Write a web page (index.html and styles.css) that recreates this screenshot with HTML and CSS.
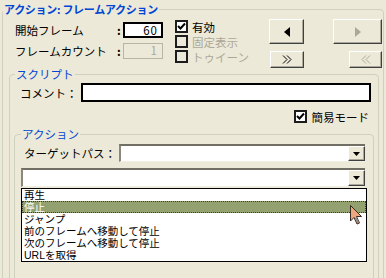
FILE: index.html
```html
<!DOCTYPE html>
<html>
<head>
    <link rel="stylesheet" href="styles.css">
</head>
<body>

    <fieldset class="group outer">
        <legend>アクション: フレームアクション</legend>

        <div class="top">
            <div class="fields">
                <div class="field">
                    <span class="lbl">開始フレーム</span>
                    <span class="colon">:</span>
                    <span class="box num">60</span>
                </div>
                <div class="field">
                    <span class="lbl">フレームカウント</span>
                    <span class="colon">:</span>
                    <span class="box num off">1</span>
                </div>
            </div>

            <div class="checks">
                <div class="chk">
                    <span class="cb on"><svg width="9" height="9" viewBox="0 0 9 9"><path d="M1 4 L3.5 6.5 L8 1.5" fill="none" stroke="#000" stroke-width="2"/></svg></span>
                    有効
                </div>
                <div class="chk off"><span class="cb"></span>固定表示</div>
                <div class="chk off"><span class="cb"></span>トゥイーン</div>
            </div>

            <div class="btns">
                <div class="btnrow">
                    <div class="btn big prev"><svg width="8" height="10" viewBox="0 0 8 10"><path d="M7 0 L7 10 L1 5 Z" fill="#000"/></svg></div>
                    <div class="btn big next"><svg width="8" height="10" viewBox="0 0 8 10"><path d="M1 0 L1 10 L7 5 Z" fill="#ACA899"/></svg></div>
                </div>
                <div class="btnrow">
                    <div class="btn small fwd"><svg width="12" height="9" viewBox="0 0 12 9"><path d="M2 0.5 L6 4.5 L2 8.5 M6 0.5 L10 4.5 L6 8.5" fill="none" stroke="#000" stroke-width="1"/></svg></div>
                    <div class="btn small back"><svg width="12" height="9" viewBox="0 0 12 9"><path d="M10 0.5 L6 4.5 L10 8.5 M6 0.5 L2 4.5 L6 8.5" fill="none" stroke="#ACA899" stroke-width="1"/></svg></div>
                </div>
            </div>
        </div>

        <fieldset class="group script">
            <legend>スクリプト</legend>

            <div class="comment">
                <span class="clbl">コメント：</span>
                <span class="box wide"></span>
            </div>

            <div class="simple">
                <span class="cb on"><svg width="9" height="9" viewBox="0 0 9 9"><path d="M1 4 L3.5 6.5 L8 1.5" fill="none" stroke="#000" stroke-width="2"/></svg></span>
                簡易モード
            </div>

            <fieldset class="group action">
                <legend>アクション</legend>

                <div class="target">
                    <span class="tlbl">ターゲットパス：</span>
                    <div class="sel">
                        <span class="seltext"></span>
                        <span class="drop"><svg width="7" height="4" viewBox="0 0 7 4"><path d="M0 0 L7 0 L3.5 4 Z" fill="#000"/></svg></span>
                    </div>
                </div>

                <div class="sel second">
                    <span class="seltext"></span>
                    <span class="drop"><svg width="7" height="4" viewBox="0 0 7 4"><path d="M0 0 L7 0 L3.5 4 Z" fill="#000"/></svg></span>
                </div>

                <ul class="list">
                    <li>再生</li>
                    <li class="picked">停止</li>
                    <li>ジャンプ</li>
                    <li>前のフレームへ移動して停止</li>
                    <li>次のフレームへ移動して停止</li>
                    <li>URLを取得</li>
                </ul>
            </fieldset>
        </fieldset>
    </fieldset>

    <svg class="pointer" width="14" height="21" viewBox="0 0 14 21">
        <path d="M0.5 0.5 L0.5 16 L4 12.5 L7 19 L9.5 18 L6.5 11.5 L11.5 11.5 Z" fill="#EBA77E" stroke="#3a2a22" stroke-width="1"/>
        <path d="M5 13 L7.3 18.2 L9 17.5 L6.8 12.5 Z" fill="#8E8E8E"/>
    </svg>

</body>
</html>
```

FILE: styles.css
```css
*{
    margin: 0;
    padding: 0;
    box-sizing: border-box;
}
body {
    font-family: "Noto Sans CJK JP", sans-serif;
    font-size: 11.5px;
    color: #000;
    background-color: #ECE9D8;
    height: 278px;
    overflow: hidden;
    padding-top: 2px;
    position: relative;
}

.group {
    border: 1px solid #D0D0BF;
    border-radius: 4px;
    min-width: 0;
}
.group legend {
    color: #0046D5;
    line-height: 14px;
    padding: 0 1px;
}

.outer {
    margin: 0 2px;
    height: 400px;
}
.outer > legend {
    font-weight: bold;
    font-size: 11px;
    letter-spacing: -0.3px;
}

.top {
    display: flex;
    height: 51px;
    padding: 3px 0 0 12px;
}
.fields {
    display: flex;
    flex-direction: column;
    gap: 5px;
    width: 148px;
    padding-top: 3px;
}
.field {
    display: flex;
    align-items: center;
    height: 16px;
}
.lbl {
    width: 100px;
    white-space: nowrap;
}
.colon {
    width: 9px;
    text-align: center;
    font-weight: bold;
}
.box {
    display: block;
    background-color: #fff;
    border: 2px solid #000;
}
.num {
    width: 40px;
    height: 16px;
    line-height: 12px;
    text-align: right;
    padding-right: 3px;
    letter-spacing: 1px;
}
.num.off {
    background-color: #ECE9D8;
    border: 1px solid #B8B5A6;
    color: #ACA899;
    padding-right: 4px;
}

.checks {
    display: flex;
    flex-direction: column;
    margin-left: 12px;
}
.chk {
    display: flex;
    align-items: center;
    gap: 4px;
    height: 15px;
    white-space: nowrap;
}
.chk.off {
    color: #ACA899;
}
.cb {
    display: flex;
    align-items: center;
    justify-content: center;
    width: 13px;
    height: 13px;
    border: 2px solid #1c1c1c;
    background-color: #ECE9D8;
}
.cb.on {
    background-color: #fff;
}

.btns {
    display: flex;
    flex-direction: column;
    gap: 7px;
    width: 113px;
    margin-left: auto;
    margin-right: 1px;
}
.btnrow {
    display: flex;
    justify-content: space-between;
}
.btn {
    display: flex;
    align-items: center;
    justify-content: center;
    background-color: #ECE9D8;
    border: 1px solid;
    border-color: #fff #404040 #404040 #fff;
    box-shadow: inset -1px -1px 0 #ACA899;
}
.big {
    height: 25px;
}
.prev {
    width: 35px;
}
.next {
    width: 49px;
}
.small {
    height: 17px;
}
.fwd {
    width: 34px;
    margin-left: 1px;
}
.back {
    width: 33px;
}

.script {
    margin: 0 4px 0 6px;
}
.script > legend {
    margin-left: 5px;
}
.comment {
    display: flex;
    align-items: center;
    padding: 2px 7px 0 10px;
}
.clbl {
    width: 61px;
    white-space: nowrap;
}
.wide {
    flex: 1;
    height: 19px;
}
.simple {
    display: flex;
    align-items: center;
    justify-content: flex-end;
    gap: 5px;
    height: 13px;
    margin-top: 8px;
    padding-right: 9px;
}

.action {
    margin: 4px 4px 0 4px;
    padding-top: 3px;
    padding-bottom: 60px;
}
.action > legend {
    margin-left: 6px;
}
.action > legend ~ * {
    margin-left: 6px;
    margin-right: 8px;
}
.target {
    display: flex;
    align-items: center;
    height: 18px;
}
.tlbl {
    width: 98px;
    padding-left: 3px;
    white-space: nowrap;
}
.sel {
    flex: 1;
    display: flex;
    height: 18px;
    background-color: #fff;
    border-style: solid;
    border-width: 2px 0 1px 2px;
    border-color: #716F64 #F1EFE2 #F1EFE2 #8A887C;
}
.seltext {
    flex: 1;
}
.drop {
    display: flex;
    align-items: center;
    justify-content: center;
    width: 17px;
    background-color: #ECE9D8;
    border: 1px solid;
    border-color: #fff #404040 #404040 #fff;
    box-shadow: inset -1px -1px 0 #ACA899;
}
.action > .second {
    height: 19px;
    margin-top: 6px;
}
.action > .list {
    list-style: none;
    margin-top: 1px;
    margin-right: 6px;
    background-color: #fff;
    border: 1px solid #000;
}
.list li {
    font-family: "Liberation Sans", "Noto Sans CJK JP", sans-serif;
    font-size: 10.5px;
    line-height: 12px;
    height: 12px;
    padding-left: 2px;
    white-space: nowrap;
}
.list li.picked {
    background-color: #93A070;
    color: #fff;
    outline: 1px dotted #3c3c30;
    outline-offset: -1px;
}

.pointer {
    position: absolute;
    left: 350px;
    top: 205px;
}
```
